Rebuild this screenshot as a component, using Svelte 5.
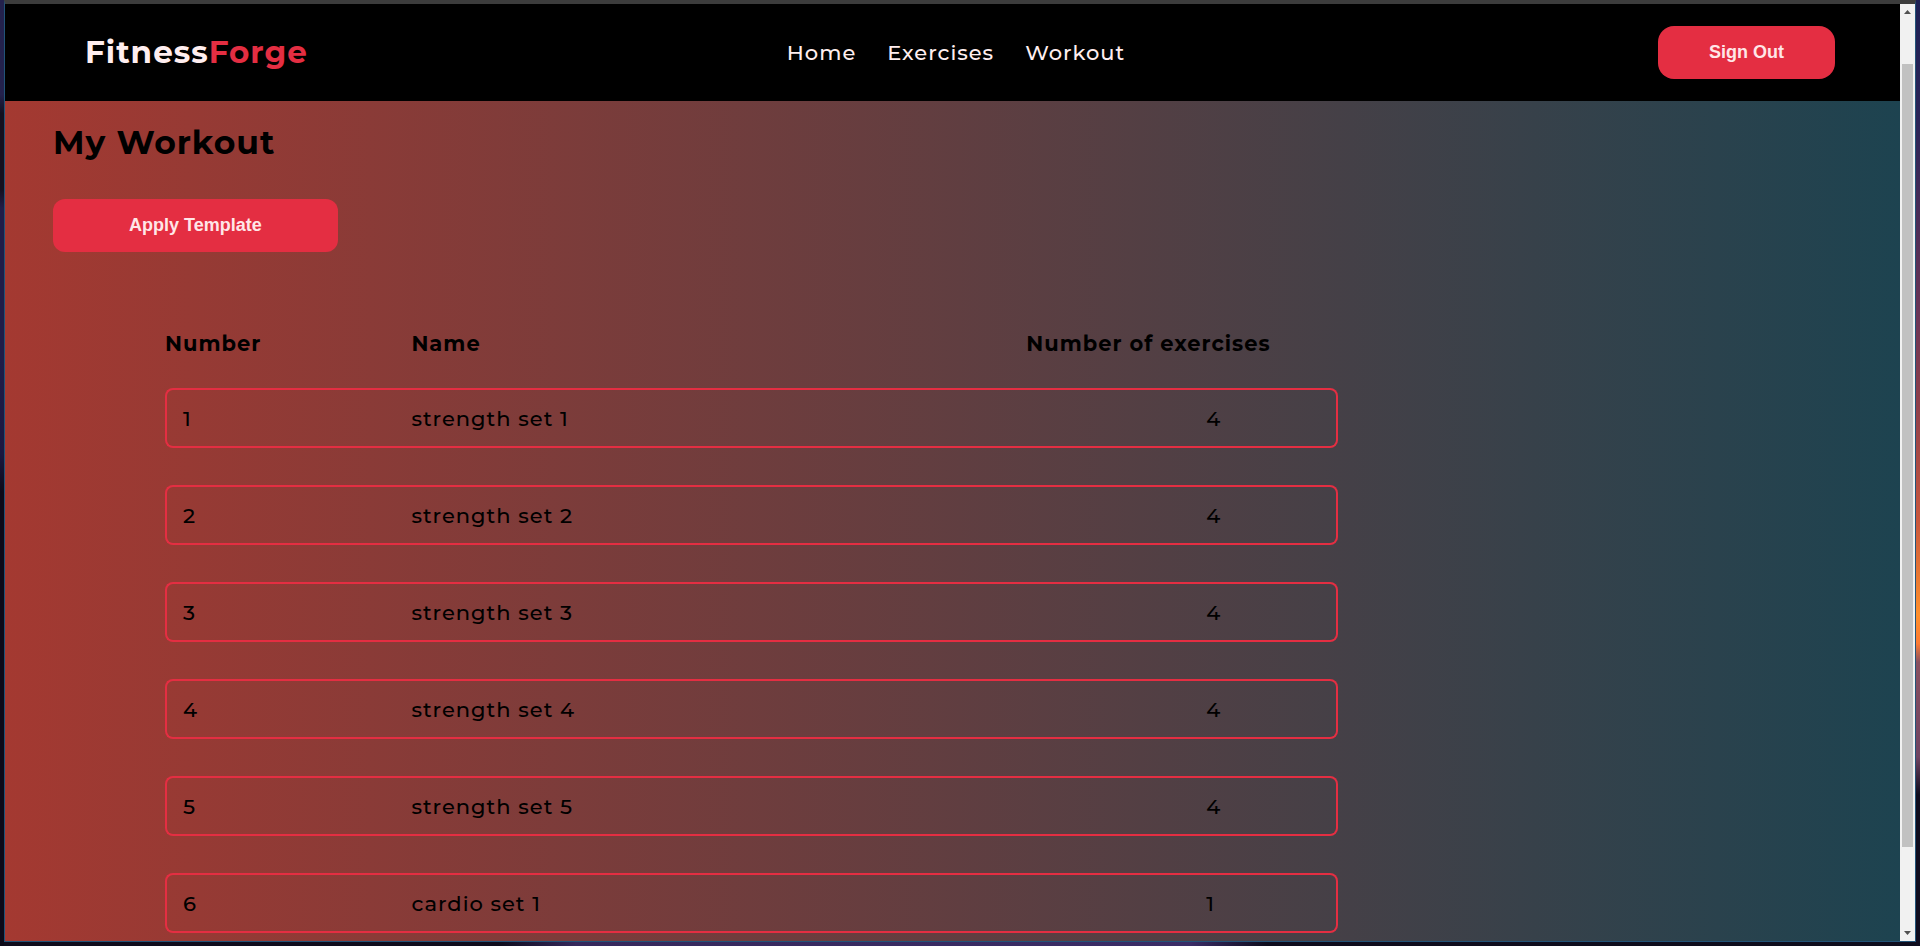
<script>
  const links = ['Home', 'Exercises', 'Workout'];
  const workouts = [
    { name: 'strength set 1', count: 4 },
    { name: 'strength set 2', count: 4 },
    { name: 'strength set 3', count: 4 },
    { name: 'strength set 4', count: 4 },
    { name: 'strength set 5', count: 4 },
    { name: 'cardio set 1', count: 1 }
  ];
</script>

<div class="desktop">
  <div class="window">
    <div class="page">
      <header>
        <a class="logo" href="#home">Fitness<span>Forge</span></a>
        <nav>
          {#each links as link}
            <a href="#{link.toLowerCase()}">{link}</a>
          {/each}
        </nav>
        <button class="signout" type="button">Sign Out</button>
      </header>
      <main>
        <h1>My Workout</h1>
        <button class="apply" type="button">Apply Template</button>
        <table>
          <thead>
            <tr>
              <th class="num" scope="col">Number</th>
              <th scope="col">Name</th>
              <th class="count" scope="col">Number of exercises</th>
            </tr>
          </thead>
          <tbody>
            {#each workouts as workout, i}
              <tr>
                <td>{i + 1}</td>
                <td>{workout.name}</td>
                <td>{workout.count}</td>
              </tr>
            {/each}
          </tbody>
        </table>
      </main>
    </div>
    <div class="scrollbar" aria-hidden="true">
      <svg viewBox="0 0 15 17" width="15" height="17"><path d="M4 10h7L7.500 6z" fill="#505050" /></svg>
      <div class="track"><div class="thumb"></div></div>
      <svg viewBox="0 0 15 17" width="15" height="17"><path d="M4 7h7L7.500 11z" fill="#505050" /></svg>
    </div>
  </div>
</div>

<style>
  :global(body) {
    margin: 0;
  }
  .desktop,
  .desktop * {
    box-sizing: border-box;
  }
  .desktop {
    height: 100vh;
    padding: 0 4px 4px;
    background:
      linear-gradient(#23214c 0 10%, #12101f 12% 20%, #1f1d48 22% 38%, #1b1840 48%, #0c0a18 52%) left / 4px 100% no-repeat,
      linear-gradient(#1d2054, #2c2558 13%, #6b3557 33%, #91404b 43%, #c9573e 55%, #ff8f2c 65%, #fd7a33 68%, #8a5060 70%, #704462 80%, #0f0c1e 84%) right / 4px 100% no-repeat,
      linear-gradient(90deg, #0e0c1c 26%, #35285c 30%, #3a2c66 62%, #0e0c1c 66%) bottom / 100% 4px no-repeat;
    font-family: Montserrat, Inter, sans-serif;
    font-size: 21px;
    letter-spacing: 1px;
    color: #000;
  }
  .window {
    display: flex;
    height: 100%;
    overflow: hidden;
    border: 1px solid #215378;
    border-top: 4px solid #3c3c3c;
  }
  .page {
    flex: 1;
    min-width: 0;
    overflow: hidden;
    background: linear-gradient(to left, #1d4350, #a43931);
  }
  header {
    display: grid;
    grid-template-columns: 1fr auto 1fr;
    align-items: center;
    padding: 22px 65px 22px 72px;
    background: #000;
  }
  a {
    color: #ffeeef;
    text-decoration: none;
  }
  .logo {
    padding: 0 0 2px 8px;
    font-size: 31px;
    line-height: 36px;
    font-weight: 700;
  }
  .logo span {
    color: #e42e42;
  }
  nav {
    display: flex;
    gap: 31px;
    font-weight: 500;
  }
  button {
    height: 53px;
    border: 0;
    background: #e42e42;
    color: #ffe6e8;
    font: bold 18px "Liberation Sans", Arial, sans-serif;
  }
  .signout {
    justify-self: end;
    padding: 0 51px;
    border-radius: 16px;
  }
  .apply {
    display: block;
    padding: 0 76px;
    border-radius: 12px;
  }
  main {
    padding: 22px 48px;
  }
  h1 {
    margin: 0 0 38px;
    font-size: 33px;
    line-height: 38px;
    font-weight: 700;
  }
  table {
    width: calc(65% + 4px);
    min-width: 700px;
    margin: 48px 0 0 112px;
    border-spacing: 0 37px;
    table-layout: fixed;
    text-align: left;
  }
  th {
    padding: 0;
    line-height: 14px;
    font-weight: 700;
  }
  .num {
    width: 21%;
  }
  .count {
    width: 26.6%;
  }
  td {
    height: 60px;
    padding: 0;
    border: solid #e42e42;
    border-width: 2px 0;
    font-weight: 500;
  }
  td:first-child {
    padding-left: 16px;
    border-left-width: 2px;
    border-radius: 8px 0 0 8px;
  }
  td:last-child {
    padding-left: 180px;
    border-right-width: 2px;
    border-radius: 0 8px 8px 0;
  }
  .scrollbar {
    display: flex;
    flex-direction: column;
    width: 15px;
    background: #f1f1f1;
  }
  .track {
    flex: 1;
    padding: 43px 2px 77px;
  }
  .thumb {
    height: 100%;
    background: #c1c1c1;
  }
</style>
